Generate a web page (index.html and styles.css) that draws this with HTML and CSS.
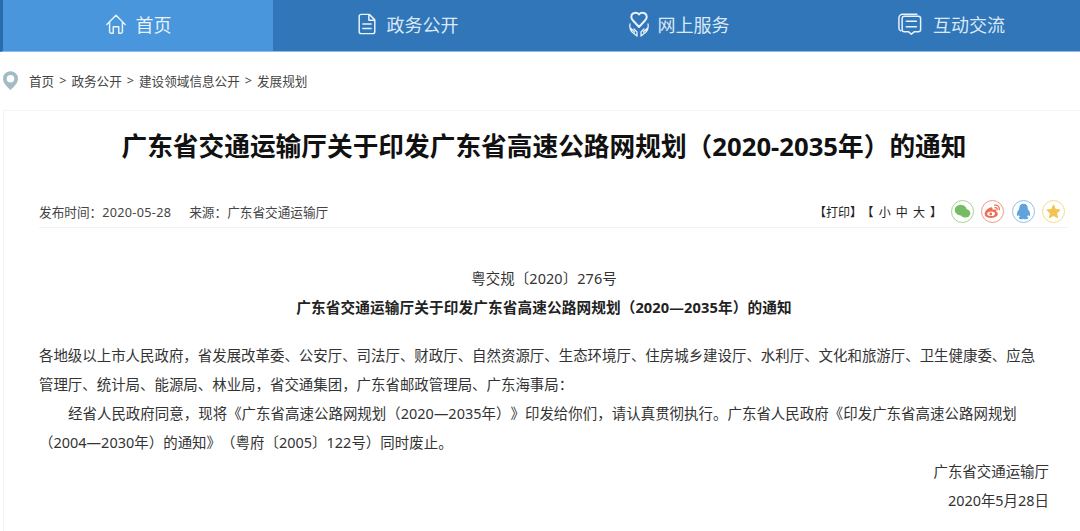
FILE: index.html
```html
<!DOCTYPE html>
<html lang="zh-CN">
<head>
<meta charset="utf-8">
<title>广东省交通运输厅关于印发广东省高速公路网规划（2020-2035年）的通知</title>
<link rel="stylesheet" href="styles.css">
</head>
<body>
<nav class="nav">
  <a class="tab tab-active">
    <svg class="nav-icon" viewBox="0 0 24 24"><path d="M2 12.500 12 2.500l10 10M5 10v10.500a1.500 1.500 0 0 0 1.500 1.500H9v-7h6v7h2.500a1.500 1.500 0 0 0 1.500-1.500V10"/></svg>
    <span>首页</span>
  </a>
  <a class="tab tab-shift">
    <svg class="nav-icon" viewBox="0 0 24 24"><path d="M5.500 1.500h9l6 6v13a2 2 0 0 1-2 2h-13a2 2 0 0 1-2-2v-17a2 2 0 0 1 2-2zM14 2v6h6M7.500 12h9M7.500 17h9"/></svg>
    <span>政务公开</span>
  </a>
  <a class="tab tab-shift">
    <svg class="nav-icon nav-icon-tall" viewBox="0 0 20 26"><path d="M10 16 4 9.500C1.500 7 2 3.500 4 2.500 6 1.500 8.500 1.500 10 3.500 11.500 1.500 14 1.500 16 2.500 18 3.500 18.500 7 16 9.500z"/><path class="hands" d="M1 13c-.5 3 0 6 2 8l5 4v-4l-3-3M19 13c.5 3 0 6-2 8l-5 4v-4l3-3M1.500 17l4 4M18.500 17l-4 4"/></svg>
    <span>网上服务</span>
  </a>
  <a class="tab tab-last">
    <svg class="nav-icon nav-icon-wide" viewBox="0 0 26 24"><path d="M3 19.500C1.800 19 1 18 1 16.500V5.500C1 3 3 1.500 5 1.500h15.500M7 3.500h15a2.500 2.500 0 0 1 2.500 2.500v12a2.500 2.500 0 0 1-2.500 2.500h-4.500L14.500 23l-3-2.500H7A2.500 2.500 0 0 1 4.500 18V6A2.500 2.500 0 0 1 7 3.500zM9 9h11M9 15h11"/></svg>
    <span>互动交流</span>
  </a>
</nav>
<div class="crumbs">
  <svg class="pin" viewBox="0 0 16 20"><path fill-rule="evenodd" d="M8 0a8 8 0 0 1 8 8c0 5-5 9-8 12C5 17 0 13 0 8a8 8 0 0 1 8-8zm0 4a4 4 0 1 0 0 8 4 4 0 0 0 0-8z"/></svg>
  <span>首页</span><i>&gt;</i><span>政务公开</span><i>&gt;</i><span>建设领域信息公开</span><i>&gt;</i><span>发展规划</span>
</div>
<main class="card">
  <h1 class="title">广东省交通运输厅关于印发广东省高速公路网规划（2020-2035年）的通知</h1>
  <div class="meta">
    <div class="meta-left">
      <span>发布时间：<span class="stamp">2020-05-28</span></span>
      <span>来源：广东省交通运输厅</span>
    </div>
    <div class="meta-right">
      <span class="tools print">【打印】</span>
      <span class="tools sizes">【 小 中 大 】</span>
      <span class="share share-green"><svg viewBox="0 0 24 24"><ellipse cx="9.500" cy="10" rx="8.500" ry="7.500"/><ellipse cx="16" cy="14.500" rx="7" ry="6"/></svg></span>
      <span class="share share-red"><svg viewBox="0 0 24 24"><path fill-rule="evenodd" d="M10 21c-5 0-9-2-9-5.500 0-4 5.500-9.500 9-9.500 2 0 2.500 1.500 2 3.500 3-1 5.500-.5 5.500 1.500 0 .8-.2 1.200-.5 1.500 1.500.5 2.500 1.500 2.500 3 0 3-4.500 5.500-9.500 5.500zm0-2.500c3.200 0 5.500-1.500 5.500-3.500s-2.300-3-5.500-3-5.500 1.500-5.500 3.500 2.300 3 5.500 3z"/><circle cx="9.500" cy="15.500" r="2"/><path class="share-stroke" d="M15 3c4-.8 7.500 2.500 6.500 6.500M15.500 6.500c2-.4 3.500 1 3 3"/></svg></span>
      <span class="share share-blue"><svg viewBox="0 0 24 24"><path d="M12 1c4 0 6 3 6 6.500 0 1 .2 1.500 1 2.500 1.800 2.200 3 5.500 2 8-.5 1-1.500 0-2.500-1.200-.3 1-.8 2-1.500 2.500 1.200.6 1.800 1.200 1.800 1.900 0 1-2.300 1.800-4 1.800-1 0-2.200-.3-2.800-.9-.6.6-1.800.9-2.800.9-1.700 0-4-.8-4-1.800 0-.7.600-1.300 1.800-1.900-.7-.5-1.200-1.500-1.500-2.500-1 1.200-2 2.200-2.500 1.200-1-2.500.2-5.800 2-8 .8-1 1-1.500 1-2.500C6 4 8 1 12 1z"/></svg></span>
      <span class="share share-gold"><svg viewBox="0 0 24 24"><path d="m12 3 2.800 6 6.200.8-4.600 4.300 1.200 6.400-5.600-3.200-5.600 3.200 1.200-6.400L3 9.800 9.200 9z"/></svg></span>
    </div>
  </div>
  <article class="doc">
    <p class="center">粤交规〔2020〕276号</p>
    <p class="center strong">广东省交通运输厅关于印发广东省高速公路网规划（2020—2035年）的通知</p>
    <p class="addressee">各地级以上市人民政府，省发展改革委、公安厅、司法厅、财政厅、自然资源厅、生态环境厅、住房城乡建设厅、水利厅、文化和旅游厅、卫生健康委、应急管理厅、统计局、能源局、林业局，省交通集团，广东省邮政管理局、广东海事局：</p>
    <p class="indent">经省人民政府同意，现将《广东省高速公路网规划（2020—2035年）》印发给你们，请认真贯彻执行。广东省人民政府《印发广东省高速公路网规划（2004—2030年）的通知》（粤府〔2005〕122号）同时废止。</p>
    <p class="right">广东省交通运输厅</p>
    <p class="right">2020年5月28日</p>
  </article>
</main>
</body>
</html>
```

FILE: styles.css
```css
* { box-sizing: border-box; }
html, body { margin: 0; padding: 0; }
body {
  width: 1080px;
  height: 531px;
  overflow: hidden;
  background: #fff;
  color: #333;
  font-family: "Noto Sans", "Noto Sans CJK SC", sans-serif;
  text-spacing-trim: space-all;
}
.nav {
  display: flex;
  height: 52px;
  background: #3176b8;
  border-bottom: 1px solid #8dbde8;
  border-left: 3px solid #2a6cab;
}
.tab {
  flex: 0 0 272px;
  display: flex;
  align-items: center;
  justify-content: center;
  gap: 9px;
  padding-bottom: 3px;
  color: #dbe9f6;
  font-size: 18px;
}
.tab-active { flex: 0 0 270px; background: #4a96dc; color: #e8f2fb; }
.tab-shift { padding-right: 4px; }
.tab-last { gap: 11px; padding-right: 3px; }
.nav-icon {
  width: 22px;
  height: 24px;
  fill: none;
  stroke: #e8f2fb;
  stroke-width: 1.6;
  stroke-linejoin: round;
  stroke-linecap: round;
}
.nav-icon-wide { width: 24px; }
.nav-icon-tall { width: 20px; height: 26px; stroke-width: 2; }
.hands { stroke-width: 1.300; }
.crumbs {
  display: flex;
  align-items: center;
  height: 58px;
  padding: 0 0 2px 3px;
  font-size: 12.600px;
  color: #444;
}
.pin { width: 15px; height: 19px; fill: #a3bbc4; margin-right: 11px; }
.crumbs i { font-style: normal; margin: 0 5px; }
.card {
  margin-left: 3px;
  height: 440px;
  border: 1px solid #f4f4f4;
  border-right: 0;
  border-bottom: 0;
  padding: 0 12px 0 35px;
}
.title {
  margin: 0 19px 0 0;
  padding-top: 17px;
  height: 76px;
  font-size: 25.700px;
  line-height: 38px;
  font-weight: 700;
  color: #111;
  text-align: center;
}
.meta {
  display: flex;
  align-items: flex-end;
  justify-content: space-between;
  height: 41px;
  padding-bottom: 4px;
  border-bottom: 1px solid #f2f2f2;
  font-size: 12.650px;
  color: #444;
}
.meta-left { display: flex; gap: 18px; line-height: 21px; }
.stamp { letter-spacing: .3px; }
.meta-right { display: flex; align-items: center; gap: 7.500px; padding-right: 3px; }
.tools { color: #222; font-size: 12px; word-spacing: 2px; }
.print { margin-right: -8px; }
.sizes { margin-right: 1px; }
.share {
  display: flex;
  align-items: center;
  justify-content: center;
  width: 23px;
  height: 23px;
  border-radius: 50%;
  border: 1.300px solid;
}
.share svg { width: 17px; height: 17px; }
.share-green { border-color: #a2d492; fill: #76bd62; }
.share-red { border-color: #f09a86; fill: #ea6f52; }
.share-blue { border-color: #8fbfe9; fill: #5fa3de; }
.share-gold { border-color: #f6dc85; fill: #f3c452; stroke: #f3c452; stroke-linejoin: round; stroke-width: 1.500px; }
.share-stroke { fill: none; stroke: #ea6f52; stroke-width: 1.800; stroke-linecap: round; }
.doc { margin-right: 19px; padding-top: 36px; font-size: 14.450px; line-height: 29px; color: #333; }
.doc p { margin: 0; }
.center { text-align: center; letter-spacing: .1px; }
.strong { font-weight: 700; color: #222; font-size: 14.650px; }
.addressee { padding-top: 19px; }
.indent { text-indent: 29px; letter-spacing: .03px; }
.right { text-align: right; }
```
